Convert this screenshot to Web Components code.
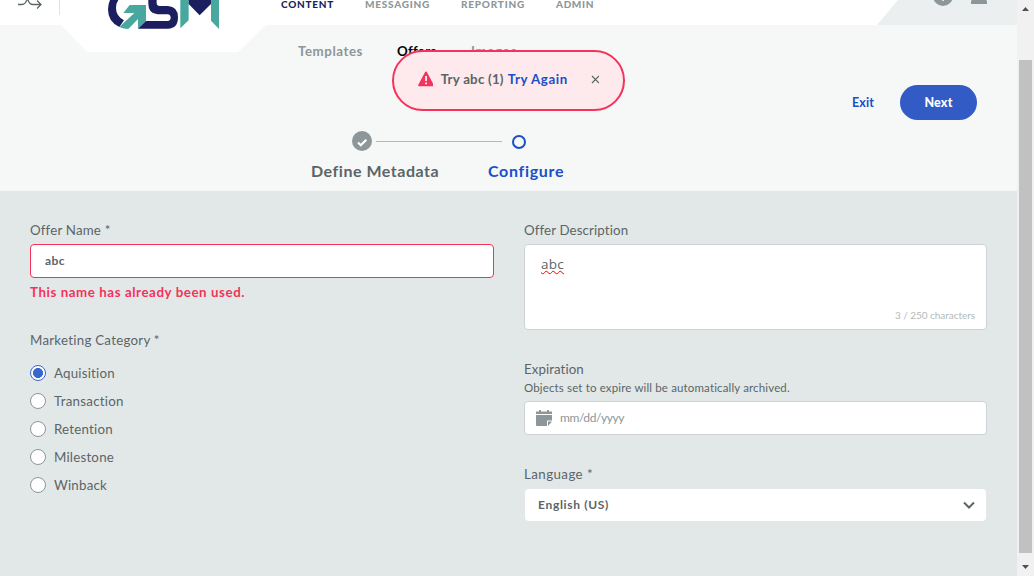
<!DOCTYPE html>
<html lang="en"><head><meta charset="utf-8"><title>Offers</title>
<style>html,body{margin:0;height:576px;overflow:hidden}body{font-family:Lato,"Open Sans",sans-serif;color:#5b6567}</style></head>
<body><gsm-app></gsm-app>
<script>
const define=(name,html,ready)=>customElements.define(name,class extends HTMLElement{
  connectedCallback(){if(this.shadowRoot)return;this.attachShadow({mode:'open'}).innerHTML=html;if(ready)ready.call(this,this.shadowRoot);}
});

/* One line of text; letter spacing is tracked so the line spans the "span" attribute. */
define('ui-text','<style>:host{display:block;white-space:pre;line-height:16px;height:16px;font-size:13.3px}span{display:inline-block}:host([misspelt]) span{text-decoration:underline wavy red 1px;text-underline-offset:1px;text-decoration-skip-ink:none}</style><span><slot></slot></span>',function(r){
  const w=+this.getAttribute('span'),s=r.querySelector('span');
  if(w){const n=this.textContent.length,d=(w-s.getBoundingClientRect().width)/n;s.style.letterSpacing=d.toFixed(3)+'px';this.style.width=w+'px';}
});

define('gsm-header',`<style>
:host{display:block;height:25px;background:#fff;position:relative}
.bar{display:flex;height:25px}
.menu{width:59px;height:15px;border-right:1px solid #dfe3e4}
nav{display:flex;gap:31px;margin-left:221px;color:#8d9698;font-weight:900}
nav ui-text{font-size:10px;line-height:9px;height:9px}
.active{color:#1a1f5c}
.user{margin-left:auto;width:140px;height:25px}
.logo{position:absolute;left:61px;top:0;z-index:1}
svg{display:block}
</style>
<div class="bar"><div class="menu"><svg width="59" height="15" fill="none" stroke="#5b6567" stroke-width="1.3"><path d="M18 4.5h4c3 0 4-2 5-5M28 0c1 3 2 4.500 5 4.500h8M37 .5l4 4-4 4"/></svg></div>
<nav><ui-text class="active" span="53">CONTENT</ui-text><ui-text span="65">MESSAGING</ui-text><ui-text span="64">REPORTING</ui-text><ui-text span="38">ADMIN</ui-text></nav>
<svg class="user" width="140" height="25"><path fill="#ebeff0" d="M21 0h119v25H0z"/><circle cx="66" cy="-4" r="10" fill="#8d9698"/><path d="M65.300 0h1.400v1h-1.400z" fill="#fff"/><path d="M94 4V2q0-3 5-4h6q5 1 5 4v2z" fill="#8d9698"/></svg></div>
<svg class="logo" width="205" height="52"><path fill="#fff" d="M0 0h205v25l-28 27H26L0 25z"/><g transform="translate(-61) scale(.3333)">
<path fill="#1c1f5f" d="M330 0h25q-7 10-7 24 0 24 24 37L358 81Q324 66 324 28q0-15 6-28z"/>
<path fill="#48a79e" d="M389 15h49v48l-24 23V57l-29 30q-14 0-27-6l45-42h-33z"/>
<path fill="#1c1f5f" d="M445 0h25v10q1 8 9 8h25q30 2 30 34 0 34-30 34h-90l24-23h65q9-1 9-10t-9-10h-30q-28-2-28-32z"/>
<path fill="#48a79e" d="M541 0h25v61l-25 24zM633 0h24v87l-24-25z"/><path fill="#1c1f5f" d="M566 0h67v12l-34 34-33-34z"/></g></svg>`);

define('gsm-stepper',`<style>
:host{display:block;margin-top:11px}
.track{display:flex;align-items:center;margin-left:352px;height:20px}
.line{width:126px;height:1px;background:#b2b9ba;margin:0 10px 0 4px}
.dot{box-sizing:border-box;width:14px;height:14px;border:2px solid #1a4fc8;border-radius:50%;margin-top:2px}
.names{display:flex;gap:49px;margin:12px 0 0 311px;font-weight:700}
.names ui-text{font-size:16px}.on{color:#1a4fc8}
</style><div class="track"><svg width="20" height="20"><circle cx="10" cy="10" r="10" fill="#8d9698"/><path d="M6 11.500l2.800 2.800 5.500-5.600" fill="none" stroke="#fff" stroke-width="2.200"/></svg><div class="line"></div><div class="dot"></div></div>
<div class="names"><ui-text span="128">Define Metadata</ui-text><ui-text class="on" span="76">Configure</ui-text></div>`);

define('gsm-toast',`<style>
:host{box-sizing:border-box;display:flex;align-items:center;border:2px solid #f4325b;background:#fee9ec;border-radius:31px;padding:0 24px 3px;font-weight:700}
a{color:#1a4fc8;margin-left:4px}svg{display:block}.msg{margin-left:8px}.x{margin-left:23px}
</style><svg width="16" height="16"><path d="M8 .5q.6 0 1 .7l6.700 12.500q.5 1.500-.8 1.500H1.100Q-.2 15.200.3 13.700L7 1.200q.4-.7 1-.7z" fill="#f4325b"/><path d="M7.200 5h1.700v5H7.200zM7.200 11.500h1.700v1.800H7.200z" fill="#fff"/></svg>
<ui-text class="msg" span="63">Try abc (1)</ui-text><a><ui-text span="60">Try Again</ui-text></a><svg class="x" width="9" height="9" stroke="#5b6567" stroke-width="1.200"><path d="M1 1l7 7M8 1l-7 7"/></svg>`);

define('gsm-hero',`<style>
:host{display:block;height:166px;background:#f5f8f7;position:relative;box-sizing:border-box;padding-top:18px}
.tabs{display:flex;padding-left:298px;color:#8d9698;font-weight:700}
.o{color:#000;margin:0 35px 0 34px}
.actions{display:flex;justify-content:flex-end;align-items:center;margin:26px 40px 0 0;height:35px;font-weight:700;gap:26px}
.actions ui-text{font-size:12.500px}.actions .exit{color:#1a4fc8;height:15px}
.next{display:flex;align-items:center;justify-content:center;width:77px;height:35px;border-radius:18px;background:#325bc6;color:#fff;font-weight:900}
gsm-toast{position:absolute;left:392px;top:25px;width:233px;height:61px}
</style><div class="tabs"><ui-text span="65">Templates</ui-text><ui-text class="o" span="39">Offers</ui-text><ui-text span="46">Images</ui-text></div>
<div class="actions"><ui-text class="exit" span="22">Exit</ui-text><div class="next"><ui-text span="28">Next</ui-text></div></div>
<gsm-stepper></gsm-stepper><gsm-toast></gsm-toast>`);

define('gsm-box',`<style>
:host{box-sizing:border-box;display:flex;align-items:center;height:34px;border:1px solid #cdd3d5;border-radius:4px;background:#fff;padding:0 14px}
:host([error]){border-color:#f4325b}
:host([area]){height:86px;flex-direction:column;align-items:stretch;justify-content:space-between;padding:11px 11px 6px 16px}
:host([plain]){height:32px;border:0;margin:0 1px;padding:0 11px 0 13px;justify-content:space-between}
:host([date]){padding-left:11px}
</style><slot></slot>`);

define('gsm-radio',`<style>
:host{display:flex;height:16px;gap:8px}
i{box-sizing:border-box;width:16px;height:16px;border:1px solid #8d9698;border-radius:50%;background:#fff}
:host([checked]) i{border-color:#3866cf;background:radial-gradient(circle,#3866cf 4.700px,#fff 5.300px)}
</style><i></i><slot></slot>`);

define('gsm-form',`<style>
:host{display:grid;grid-template-columns:464px 463px;column-gap:30px;height:385px;box-sizing:border-box;padding:31px 30px 0;background:#e2e8e7}
gsm-box{margin-top:6px}.err{color:#f4325b;font-weight:700;margin-top:6px}
.cat{margin-top:32px}.radios{display:grid;gap:12px;margin-top:17px}
.s12{font-size:12px}.b{font-weight:700}
.desc{font-family:"Open Sans",sans-serif;font-size:13.500px;font-weight:500}
.count{font-size:10px;color:#b2b9ba;align-self:flex-end}
.exp{margin-top:31px}.help{font-size:11.500px;margin-top:3px;margin-bottom:-1px}.ph{color:#8d9698;margin-left:8px;font-size:12px}
</style><section><ui-text span="80">Offer Name *</ui-text><gsm-box error><ui-text class="s12 b" span="20">abc</ui-text></gsm-box><ui-text class="err" span="215">This name has already been used.</ui-text>
<ui-text class="cat" span="130">Marketing Category *</ui-text><div class="radios">
<gsm-radio checked><ui-text span="61">Aquisition</ui-text></gsm-radio><gsm-radio><ui-text span="70">Transaction</ui-text></gsm-radio><gsm-radio><ui-text span="59">Retention</ui-text></gsm-radio><gsm-radio><ui-text span="60">Milestone</ui-text></gsm-radio><gsm-radio><ui-text span="53">Winback</ui-text></gsm-radio></div></section>
<section><ui-text span="104">Offer Description</ui-text><gsm-box area><ui-text class="desc" misspelt span="23">abc</ui-text><ui-text class="count" span="80">3 / 250 characters</ui-text></gsm-box>
<ui-text class="exp" span="60">Expiration</ui-text><ui-text class="help" span="266">Objects set to expire will be automatically archived.</ui-text>
<gsm-box date><svg width="16" height="16"><path fill="#8d9698" d="M0 1.500h3V0h2v1.500h6V0h2v1.500h3V4H0zM0 5h16v5.500h-5V16H1q-1 0-1-1zM12 11.500h4L12 16z"/></svg><ui-text class="ph" span="64">mm/dd/yyyy</ui-text></gsm-box>
<ui-text class="exp" span="69">Language *</ui-text><gsm-box plain style="margin-top:7px"><ui-text class="s12 b" span="71">English (US)</ui-text><svg width="12" height="9"><path d="M1 1.500l5 5 5-5" fill="none" stroke="#5b6567" stroke-width="2"/></svg></gsm-box></section>`);

define('gsm-scrollbar',`<style>:host{display:flex;flex-direction:column;align-items:center;background:#f1f1f1;height:576px}
i{width:13px;height:493px;background:#c1c1c1;margin:49px 2px 12px}svg{display:block}</style>
<svg width="17" height="11"><path d="M5 11l3.500-4L12 11z" fill="#505050"/></svg><i></i><svg width="17" height="5"><path d="M5 0l3.500 4L12 0z" fill="#505050"/></svg>`);

define('gsm-app',`<style>:host{display:grid;grid-template-columns:1017px 17px;height:576px;overflow:hidden}gsm-header{z-index:1}</style>
<main><gsm-header></gsm-header><gsm-hero></gsm-hero><gsm-form></gsm-form></main><gsm-scrollbar></gsm-scrollbar>`);
</script></body></html>
